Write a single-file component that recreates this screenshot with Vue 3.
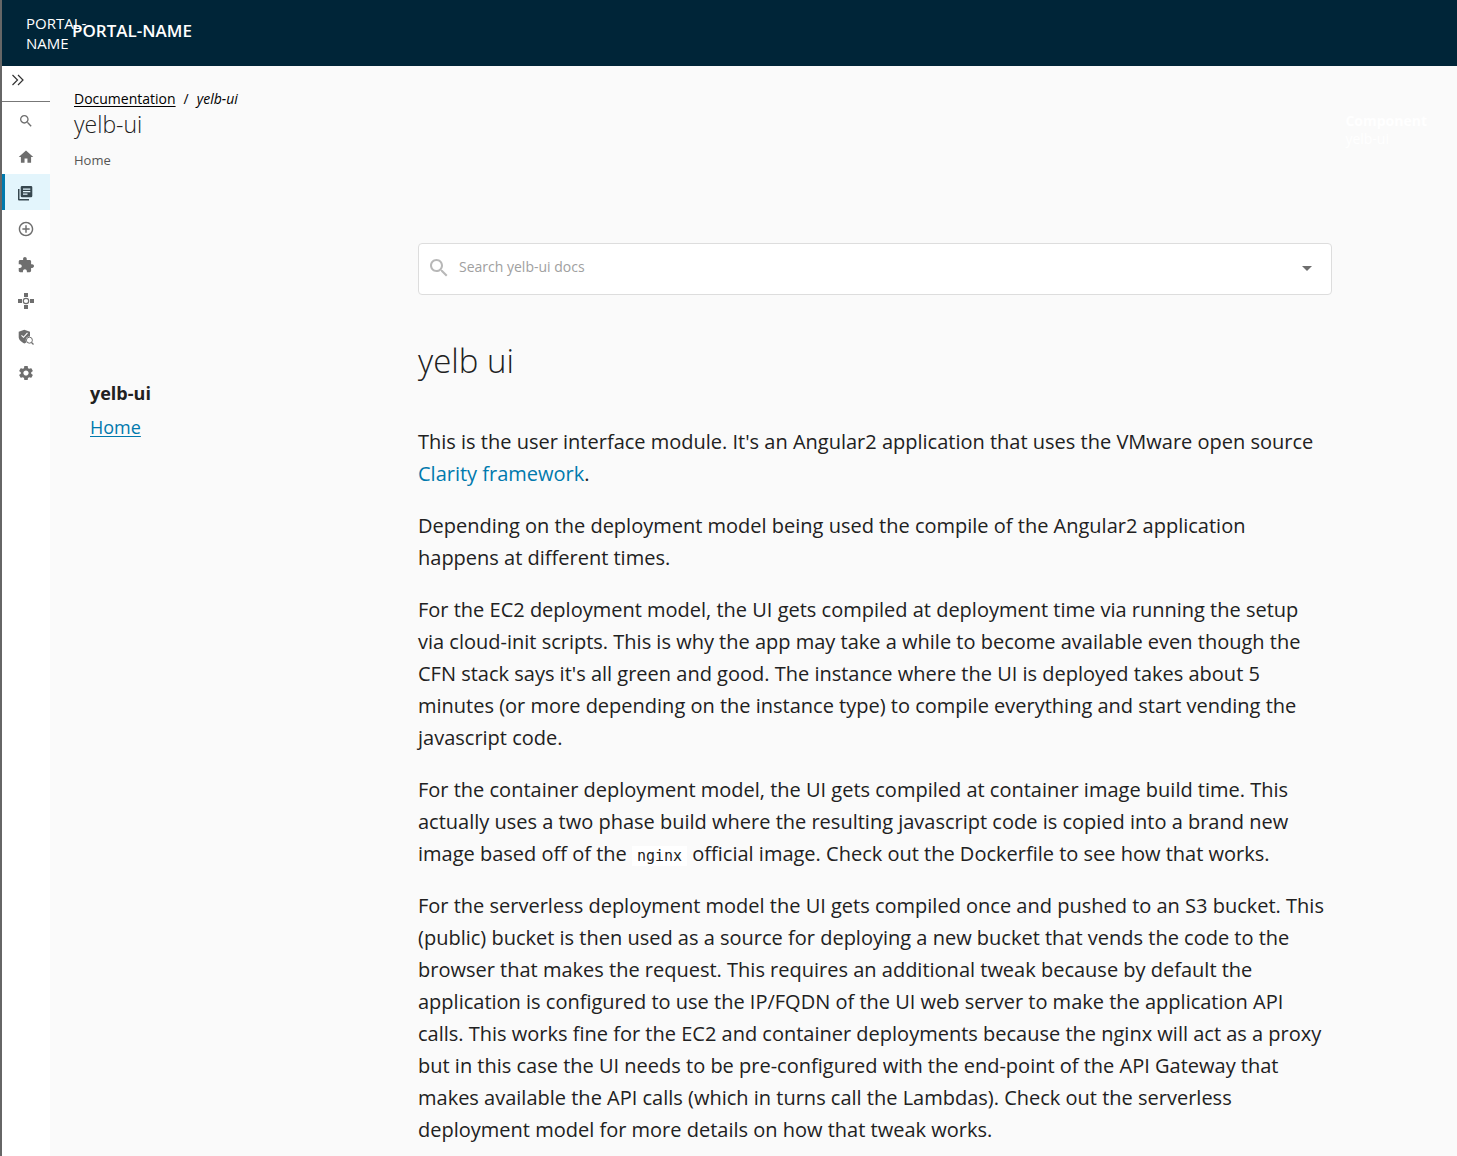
<script setup>
const navItems = [
  { id: 'search', label: 'Search' },
  { id: 'home', label: 'Home' },
  { id: 'docs', label: 'Docs', active: true },
  { id: 'create', label: 'Create' },
  { id: 'plugins', label: 'Plugins' },
  { id: 'graph', label: 'Supply Chain' },
  { id: 'security', label: 'Security Analysis' },
  { id: 'settings', label: 'Settings' },
]
</script>

<template>
  <div class="page">
    <header class="topbar">
      <a class="logo" href="#">PORTAL-<br>NAME</a>
      <a class="brand" href="#">PORTAL-NAME</a>
    </header>
    <div class="body">
      <nav class="rail" aria-label="Main">
        <button class="toggle" type="button" aria-label="Expand navigation">
          <svg width="14" height="12" viewBox="0 0 14 12" fill="none" stroke="#333" stroke-width="1.2"><path d="M1.500 1l5 5-5 5M7 1l5 5-5 5" /></svg>
        </button>
        <a v-for="item in navItems" :key="item.id" class="rail-item" :class="{ active: item.active }" href="#" :aria-label="item.label">
          <svg v-if="item.id === 'search'" width="16" height="16" viewBox="0 0 24 24"><path d="M15.500 14h-.79l-.28-.27C15.410 12.590 16 11.110 16 9.500 16 5.910 13.090 3 9.500 3S3 5.910 3 9.500 5.910 16 9.500 16c1.610 0 3.090-.59 4.230-1.570l.27.28v.79l5 4.990L20.490 19l-4.990-5zm-6 0C7.010 14 5 11.990 5 9.500S7.010 5 9.500 5 14 7.010 14 9.500 11.990 14 9.500 14z" /></svg>
          <svg v-else-if="item.id === 'home'" width="16" height="16" viewBox="1 1 22 22"><path d="M10 20v-6h4v6h5v-8h3L12 3 2 12h3v8z" /></svg>
          <svg v-else-if="item.id === 'docs'" width="16" height="16" viewBox="0 0 16 16"><path d="M0 4h1.500v10H11v1.500H1a1 1 0 0 1-1-1z" /><path fill-rule="evenodd" d="M4 1h9a1.300 1.300 0 0 1 1.300 1.300v8.700a1.300 1.300 0 0 1-1.300 1.300H4a1.300 1.300 0 0 1-1.300-1.300V2.300A1.300 1.300 0 0 1 4 1zM5 3.500v1.200h7.300V3.500zm0 2.500v1.200h7.300V6zM5 8.500v1.200h4.500V8.500z" /></svg>
          <svg v-else-if="item.id === 'create'" width="16" height="16" viewBox="1 1 22 22"><path d="M13 7h-2v4H7v2h4v4h2v-4h4v-2h-4V7zm-1-5C6.480 2 2 6.480 2 12s4.480 10 10 10 10-4.480 10-10S17.520 2 12 2zm0 18c-4.410 0-8-3.590-8-8s3.590-8 8-8 8 3.590 8 8-3.590 8-8 8z" /></svg>
          <svg v-else-if="item.id === 'plugins'" width="16" height="16" viewBox="1 1 22 22"><path d="M20.500 11H19V7c0-1.100-.9-2-2-2h-4V3.500C13 2.120 11.880 1 10.500 1S8 2.120 8 3.500V5H4c-1.100 0-1.990.9-1.990 2v3.800H3.500c1.490 0 2.700 1.210 2.700 2.700s-1.210 2.700-2.700 2.700H2V20c0 1.100.9 2 2 2h3.800v-1.500c0-1.490 1.210-2.700 2.700-2.700 1.490 0 2.700 1.210 2.700 2.700V22H17c1.100 0 2-.9 2-2v-4h1.500c1.380 0 2.500-1.120 2.500-2.500S21.880 11 20.500 11z" /></svg>
          <svg v-else-if="item.id === 'graph'" width="16" height="16" viewBox="0 0 16 16"><path d="M6 0h4v4H6zM6 12h4v4H6zM0 6h4v4H0zM12 6h4v4h-4z" /><circle cx="8" cy="8" r="2.700" fill="#fff" stroke="#6e6e6e" stroke-width="1.200" /></svg>
          <svg v-else-if="item.id === 'security'" width="16" height="16" viewBox="0 0 16 16"><path d="M6.300.8L12 2.800V8c0 3-2.500 5-5.500 6.500C3.300 13 .7 11 .7 8V2.800z" /><path d="M3.500 6.300l2 2 4-4.500" fill="none" stroke="#fff" stroke-width="1.100" /><circle cx="11.400" cy="11.200" r="3.600" fill="#fff" /><circle cx="11.400" cy="11.200" r="3" fill="#fff" stroke="#6e6e6e" stroke-width="1" /><path d="M13.500 13.500l2 2" stroke="#6e6e6e" stroke-width="1.200" /></svg>
          <svg v-else width="16" height="16" viewBox="1 1 22 22"><path fill-rule="evenodd" d="M19.140 12.940c.04-.3.060-.61.060-.94 0-.32-.02-.64-.07-.94l2.030-1.580c.18-.14.230-.41.120-.61l-1.920-3.320c-.12-.22-.37-.29-.59-.22l-2.390.96c-.5-.38-1.030-.7-1.620-.94l-.36-2.540c-.04-.24-.24-.41-.48-.41h-3.840c-.24 0-.43.170-.47.410l-.36 2.540c-.59.240-1.130.57-1.620.94l-2.390-.96c-.22-.08-.47 0-.59.220L2.740 8.870c-.12.210-.08.470.120.610l2.030 1.580c-.05.3-.09.630-.09.940s.02.640.070.940l-2.030 1.580c-.18.140-.23.410-.12.610l1.920 3.320c.12.220.37.290.59.220l2.390-.96c.5.380 1.030.7 1.620.94l.36 2.540c.05.240.24.410.48.410h3.840c.24 0 .44-.17.470-.41l.36-2.540c.59-.24 1.130-.56 1.620-.94l2.390.96c.22.080.47 0 .59-.22l1.920-3.320c.12-.22.070-.47-.12-.61l-2.010-1.580zM12 15.600c-1.980 0-3.600-1.620-3.600-3.600s1.620-3.600 3.600-3.600 3.600 1.620 3.600 3.600-1.620 3.600-3.600 3.600z" /></svg>
        </a>
      </nav>
      <main class="main">
        <div class="heading">
          <div>
            <div class="crumbs"><a href="#">Documentation</a><span>/</span><em>yelb-ui</em></div>
            <h1 class="title">yelb-ui</h1>
            <p class="subtitle">Home</p>
          </div>
          <div class="component"><strong>Component</strong><span>yelb-ui</span></div>
        </div>
        <div class="columns">
          <aside class="toc">
            <strong>yelb-ui</strong>
            <a href="#">Home</a>
          </aside>
          <article class="doc">
            <form class="search" role="search">
              <svg width="24" height="24" viewBox="0 0 24 24" fill="#b8b8b8"><path d="M15.500 14h-.79l-.28-.27C15.410 12.590 16 11.110 16 9.500 16 5.910 13.090 3 9.500 3S3 5.910 3 9.500 5.910 16 9.500 16c1.610 0 3.090-.59 4.230-1.570l.27.28v.79l5 4.990L20.490 19l-4.990-5zm-6 0C7.010 14 5 11.990 5 9.500S7.010 5 9.500 5 14 7.010 14 9.500 11.990 14 9.500 14z" /></svg>
              <input type="text" placeholder="Search yelb-ui docs" aria-label="Search yelb-ui docs">
              <button type="button" aria-label="Open"><svg width="24" height="24" viewBox="0 0 24 24" fill="#6e6e6e"><path d="M7 10l5 5 5-5z" /></svg></button>
            </form>
            <h2>yelb ui</h2>
            <p>This is the user interface module. It's an Angular2 application that uses the VMware open source<br><a href="#">Clarity framework</a>.</p>
            <p>Depending on the deployment model being used the compile of the Angular2 application<br>happens at different times.</p>
            <p>For the EC2 deployment model, the UI gets compiled at deployment time via running the setup<br>via cloud-init scripts. This is why the app may take a while to become available even though the<br>CFN stack says it's all green and good. The instance where the UI is deployed takes about 5<br>minutes (or more depending on the instance type) to compile everything and start vending the<br>javascript code.</p>
            <p>For the container deployment model, the UI gets compiled at container image build time. This<br>actually uses a two phase build where the resulting javascript code is copied into a brand new<br>image based off of the <code>nginx</code> official image. Check out the Dockerfile to see how that works.</p>
            <p>For the serverless deployment model the UI gets compiled once and pushed to an S3 bucket. This<br>(public) bucket is then used as a source for deploying a new bucket that vends the code to the<br>browser that makes the request. This requires an additional tweak because by default the<br>application is configured to use the IP/FQDN of the UI web server to make the application API<br>calls. This works fine for the EC2 and container deployments because the nginx will act as a proxy<br>but in this case the UI needs to be pre-configured with the end-point of the API Gateway that<br>makes available the API calls (which in turns call the Lambdas). Check out the serverless<br>deployment model for more details on how that tweak works.</p>
          </article>
        </div>
      </main>
    </div>
  </div>
</template>

<style>
body { background: #fafafa; }
</style>

<style scoped>
* { box-sizing: border-box; }
.page { min-height: 100vh; border-left: 2px solid #666; font-family: "Open Sans", sans-serif; color: #212121; display: flex; flex-direction: column; white-space: nowrap; }
.topbar { height: 66px; background: #002538; display: flex; align-items: center; padding-left: 24px; }
.topbar a { color: #fff; text-decoration: none; }
.logo { width: 46px; font-size: 15px; line-height: 20px; }
.brand { font-size: 17px; font-weight: 600; line-height: 20px; padding-bottom: 4px; }
.body { flex: 1; display: flex; }
.rail { width: 48px; background: #fff; display: flex; flex-direction: column; flex-shrink: 0; }
.toggle { height: 36px; border: 0; border-bottom: 1px solid #777; background: none; padding: 0 0 8px 9px; display: flex; align-items: center; }
.rail-item { height: 36px; display: flex; align-items: center; padding: 2px 0 0 16px; fill: #6e6e6e; }
.active { background: #e3f5fc; border-left: 3px solid #0079ad; padding-left: 13px; fill: #37474f; }
.main { flex: 1; min-width: 0; padding: 24px 24px 0; }
.heading { display: flex; justify-content: space-between; height: 153px; }
.crumbs { display: flex; gap: 8px; font-size: 14px; line-height: 18px; color: #000; }
.crumbs a { color: #000; text-underline-offset: 2px; }
.title { margin: 2px 0 0; font-size: 23px; font-weight: 300; line-height: 28px; }
.subtitle { margin: 13px 0 0; font-size: 13px; line-height: 18px; color: #555; }
.component { display: flex; flex-direction: column; color: #fff; font-size: 14px; line-height: 18px; padding: 22px 6px 0 0; }
.columns { display: flex; }
.toc { width: 344px; flex-shrink: 0; padding: 138px 0 24px 16px; display: flex; flex-direction: column; align-items: flex-start; gap: 10px; font-size: 18px; line-height: 24px; }
.toc a { text-underline-offset: 2px; }
a { color: #0079ad; }
.doc { flex: 1; min-width: 0; padding-right: 101px; font-size: 20px; line-height: 32px; }
.search { height: 52px; background: #fff; border: 1px solid #ddd; border-radius: 4px; display: flex; align-items: center; padding: 0 12px 2px 8px; }
.search input { flex: 1; min-width: 0; border: 0; outline: 0; background: none; padding: 0 0 3px; margin-left: 8px; font: 14px "Open Sans", sans-serif; }
.search input::placeholder { color: #a0a0a0; opacity: 1; }
.search button { border: 0; background: none; padding: 0; display: flex; }
.doc h2 { margin: 46px 0 45px; font-size: 33px; line-height: 40px; font-weight: 300; }
.doc p { margin: 0 0 20px; }
.doc p:last-child { margin-bottom: 0; }
.doc a { text-decoration: none; }
code { font: 15px "DejaVu Sans Mono", monospace; background: #fff; padding: 1px 5px; }
</style>
